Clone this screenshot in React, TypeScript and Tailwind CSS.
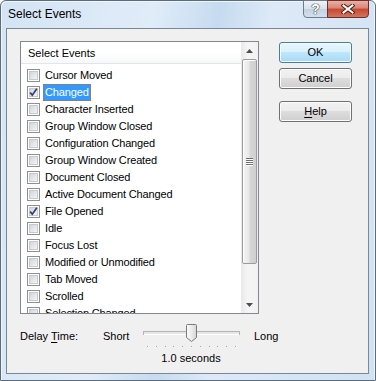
const events = [
  { label: 'Cursor Moved' },
  { label: 'Changed', checked: true, selected: true },
  { label: 'Character Inserted' },
  { label: 'Group Window Closed' },
  { label: 'Configuration Changed' },
  { label: 'Group Window Created' },
  { label: 'Document Closed' },
  { label: 'Active Document Changed' },
  { label: 'File Opened', checked: true },
  { label: 'Idle' },
  { label: 'Focus Lost' },
  { label: 'Modified or Unmodified' },
  { label: 'Tab Moved' },
  { label: 'Scrolled' },
  { label: 'Selection Changed' },
];

function CheckBox({ checked }: { checked?: boolean }) {
  return (
    <span className="relative block w-[13px] h-[13px] shrink-0 border border-[#8e8f8f] bg-white p-px">
      <span className="block w-full h-full border border-[#c6c9cd] bg-[linear-gradient(135deg,#d3d6da,#f4f4f4)]" />
      {checked && (
        <svg className="absolute left-0 top-0" width="11" height="11" viewBox="0 0 11 11">
          <path d="M2.2 5.6 L4.3 8.2 L8.8 1.8" fill="none" stroke="#2e3f78" strokeWidth="1.7" />
        </svg>
      )}
    </span>
  );
}

function Arrow({ up }: { up?: boolean }) {
  return (
    <svg width="7" height="4" viewBox="0 0 7 4">
      <path d={up ? 'M3.5 0 L7 4 L0 4 Z' : 'M0 0 L7 0 L3.5 4 Z'} fill="#4d4d4d" />
    </svg>
  );
}

function ScrollBar() {
  return (
    <div className="w-[17px] h-full flex flex-col bg-[linear-gradient(90deg,#e9e9e9,#f5f5f5_40%,#f2f2f2)]">
      <div className="h-[17px] flex items-center justify-center">
        <Arrow up />
      </div>
      <div className="mx-px h-[205px] rounded-[2px] border border-[#9b9b9b] bg-[linear-gradient(90deg,#f4f4f4,#e8e8e8_45%,#d6d6d6_55%,#cfcfcf)] shadow-[inset_1px_1px_0_#fff] flex items-center justify-center">
        <div className="flex flex-col gap-px">
          {[0, 1, 2, 3].map((i) => (
            <div key={i} className="w-[7px] h-px bg-[#6f6f6f] shadow-[0_1px_0_#fff]" />
          ))}
        </div>
      </div>
      <div className="flex-1" />
      <div className="h-[17px] flex items-center justify-center">
        <Arrow />
      </div>
    </div>
  );
}

function Button({ children, primary }: { children: React.ReactNode; primary?: boolean }) {
  return (
    <div
      className={
        primary
          ? 'w-[73px] h-[21px] rounded-[3px] border border-[#3c7fb1] bg-[linear-gradient(#eaf6fd,#d9f0fc_50%,#bee6fd_50%,#a7d9f5)] shadow-[inset_0_0_0_1px_#fff] flex items-center justify-center text-[11px] text-black'
          : 'w-[73px] h-[21px] rounded-[3px] border border-[#707070] bg-[linear-gradient(#f2f2f2,#ebebeb_50%,#dddddd_50%,#cfcfcf)] shadow-[inset_0_0_0_1px_#fcfcfc] flex items-center justify-center text-[11px] text-black'
      }
    >
      {children}
    </div>
  );
}

function Slider() {
  const ticks = Array.from({ length: 11 }, (_, i) => 4 + i * 8.8);
  return (
    <svg width="97" height="24" viewBox="0 0 97 24" className="shrink-0">
      <defs>
        <linearGradient id="thumb" x1="0" y1="0" x2="1" y2="0">
          <stop offset="0" stopColor="#fbfbfb" />
          <stop offset="0.5" stopColor="#ececec" />
          <stop offset="1" stopColor="#d4d4d4" />
        </linearGradient>
      </defs>
      <rect x="0.5" y="7.5" width="96" height="3" fill="#e7e7e7" stroke="#b3b3b3" />
      <line x1="1" y1="10.5" x2="96" y2="10.5" stroke="#ffffff" />
      <path d="M43.5 1.5 Q43.5 0.5 44.5 0.5 H52.5 Q53.5 0.5 53.5 1.5 V13.5 L48.5 17.5 L43.5 13.5 Z" fill="url(#thumb)" stroke="#7a7a7a" />
      {ticks.map((x) => (
        <rect key={x} x={Math.round(x)} y="22" width="1" height="1" fill="#a4a4a4" />
      ))}
    </svg>
  );
}

export default function App() {
  return (
    <div className="w-[376px] h-[381px] bg-white font-['Liberation_Sans',Arial,sans-serif] text-black">
      <div className="h-full flex flex-col rounded-t-[6px] border border-[#5d6c7d] bg-[linear-gradient(100deg,#d4e4f4_0%,#e0ecf8_35%,#c6dbf0_50%,#dde9f7_62%,#d0e2f4_100%)] shadow-[inset_1px_1px_0_#eef5fb,inset_-1px_0_0_#eef5fb]">
        <div className="h-[27px] flex items-start justify-between">
          <div className="pl-[7px] pt-[5px] text-[12px] leading-[16px]">Select Events</div>
          <div className="mr-[6px] -mt-px flex">
            <div className="w-[25px] h-[18px] rounded-bl-[4px] border border-[#6d7b8a] bg-[linear-gradient(#eef3f8,#d6e1ec_50%,#c3d1df_50%,#d4e0ec)] flex items-center justify-center">
              <span className="text-[14px] font-bold leading-none text-white [text-shadow:0_0_1px_#3a3a3a,0_0_1px_#3a3a3a,0_0_1px_#3a3a3a]">?</span>
            </div>
            <div className="w-[42px] h-[18px] -ml-px rounded-br-[4px] border border-[#6b2e28] bg-[linear-gradient(#eab0a6,#d78474_45%,#c6472f_50%,#d2735f)] flex items-center justify-center">
              <svg width="14" height="10" viewBox="0 0 14 10">
                <path d="M2.5 1.5 L11.5 8.5 M11.5 1.5 L2.5 8.5" stroke="#4a1c16" strokeWidth="4" strokeLinecap="square" />
                <path d="M2.5 1.5 L11.5 8.5 M11.5 1.5 L2.5 8.5" stroke="#ffffff" strokeWidth="2" strokeLinecap="square" />
              </svg>
            </div>
          </div>
        </div>

        <div className="ml-[5px] mr-[6px] h-[346px] border border-[#7b8794] bg-[#f0f0f0] pl-[13px] pt-[12px]">
          <div className="flex items-start">
            <div className="w-[239px] h-[273px] border border-[#828790] bg-white flex">
              <div className="w-[220px] h-full flex flex-col overflow-hidden">
                <div className="h-[22px] shrink-0 border-b border-[#e5e5e5] bg-[linear-gradient(#ffffff,#ffffff_50%,#f7f8f9)] pl-[7px] pt-[4px] text-[11px] leading-[14px]">
                  Select Events
                </div>
                <div className="pt-[3px]">
                  {events.map((e) => (
                    <div key={e.label} className="h-[17px] flex items-center pl-[6px]">
                      <CheckBox checked={e.checked} />
                      <span
                        className={
                          e.selected
                            ? 'ml-[3px] px-[2px] h-[17px] flex items-center bg-[#3399ff] text-white text-[11px] tracking-[-0.15px] whitespace-nowrap outline-1 outline-dotted outline-[#c96a1c] -outline-offset-1'
                            : 'ml-[3px] px-[2px] h-[17px] flex items-center text-[11px] tracking-[-0.15px] whitespace-nowrap'
                        }
                      >
                        {e.label}
                      </span>
                    </div>
                  ))}
                </div>
              </div>
              <ScrollBar />
            </div>

            <div className="ml-[20px] mt-px flex flex-col">
              <Button primary>OK</Button>
              <div className="mt-[5px]">
                <Button>Cancel</Button>
              </div>
              <div className="mt-[12px]">
                <Button>
                  <span className="underline underline-offset-2">H</span>elp
                </Button>
              </div>
            </div>
          </div>

          <div className="mt-[10px] flex items-start text-[11px] leading-[14px]">
            <span className="w-[83px] pt-[5px]">
              Delay <span className="underline underline-offset-2">T</span>ime:
            </span>
            <span className="w-[40px] pt-[5px]">Short</span>
            <Slider />
            <span className="ml-[14px] pt-[5px]">Long</span>
          </div>
          <div className="mt-[3px] ml-[123px] w-[96px] text-center text-[11px] leading-[14px]">1.0 seconds</div>
        </div>
      </div>
    </div>
  );
}
